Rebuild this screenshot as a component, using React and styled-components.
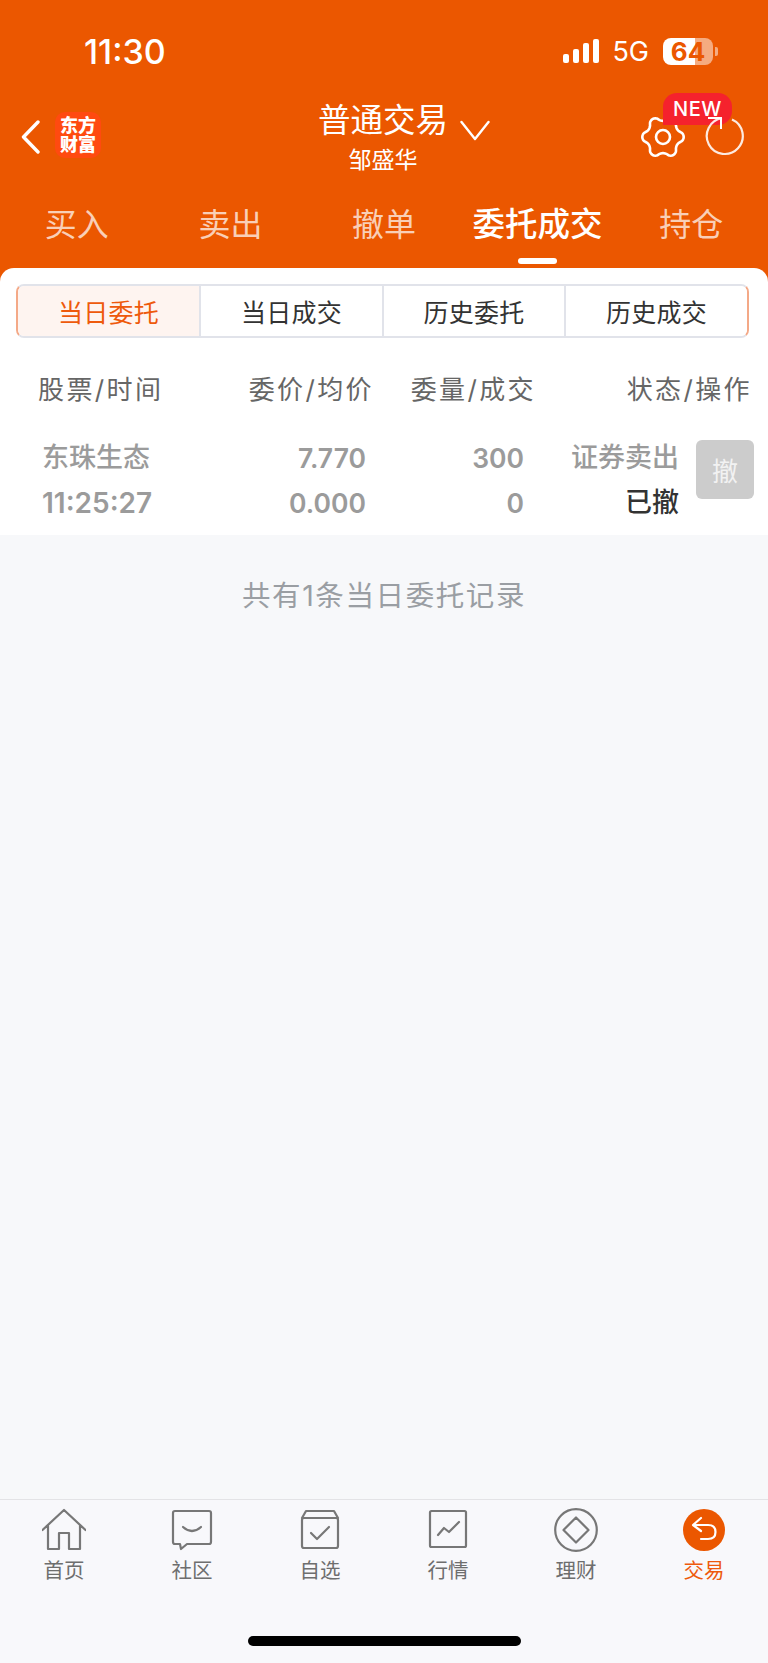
import React from 'react';
import styled, { createGlobalStyle } from 'styled-components';

const ORANGE = '#EB5700';
const FONT = 'Inter, "Noto Sans CJK SC", sans-serif';

const Global = createGlobalStyle`
  html, body { margin: 0; padding: 0; background: #f6f7f9; }
  * { box-sizing: border-box; }
`;
const Page = styled.div`
  width: 768px;
  height: 1663px;
  display: flex;
  flex-direction: column;
  overflow: hidden;
  font-family: ${FONT};
  background: #f7f8fa;
`;
const Header = styled.header`
  height: 268px;
  background: ${ORANGE};
  color: #fff;
  display: flex;
  flex-direction: column;
`;
const StatusBar = styled.div`
  height: 102px;
  display: flex;
  align-items: center;
  padding: 0 50px 0 84px;
`;
const Clock = styled.div`
  font-size: 34px;
  font-weight: 500;
  flex: 1;
`;
const Signal = styled.div`
  display: flex;
  align-items: flex-end;
  gap: 4px;
  height: 24px;
  margin-right: 13px;
  margin-left: -3px;
`;
const SignalBar = styled.span`
  width: 6px;
  height: ${p => p.$h}px;
  background: #fff;
  border-radius: 2px;
`;
const Network = styled.div`
  font-size: 27px;
  font-weight: 400;
  margin-right: 14px;
`;
const Battery = styled.div`
  width: 50px;
  height: 27px;
  border-radius: 8px;
  background: linear-gradient(90deg, #fff 64%, rgba(255,255,255,.5) 64%);
  color: ${ORANGE};
  font-size: 26px;
  font-weight: 700;
  line-height: 27px;
  text-align: center;
`;
const BatteryNub = styled.span`
  width: 3px;
  height: 9px;
  margin-left: 2px;
  border-radius: 0 2px 2px 0;
  background: rgba(255,255,255,.5);
`;
const TitleRow = styled.div`
  height: 94px;
  display: grid;
  grid-template-columns: 319px 128px 1fr;
`;
const LeftGroup = styled.div`
  display: flex;
  align-items: flex-start;
  padding: 10px 0 0 21px;
  gap: 15px;
`;
const Logo = styled.div`
  width: 46px;
  height: 46px;
  border-radius: 10px;
  background: #ff4a10;
  color: #fff;
  font-size: 18px;
  font-weight: 900;
  line-height: 19px;
  text-align: center;
  padding-top: 4px;
  white-space: nowrap;
`;
const TitleBlock = styled.div`
  display: flex;
  flex-direction: column;
  align-items: center;
`;
const Title = styled.div`
  font-size: 32.5px;
  line-height: 38px;
  white-space: nowrap;
`;
const SubTitle = styled.div`
  font-size: 23px;
  line-height: 28px;
  margin-top: 6px;
  white-space: nowrap;
`;
const RightGroup = styled.div`
  position: relative;
  padding-top: 5px;
  padding-left: 13px;
`;
const NewBadge = styled.div`
  position: absolute;
  left: 216px;
  top: -9px;
  width: 69px;
  height: 32px;
  background: #f5222d;
  border-radius: 14px 14px 14px 0;
  font-size: 20px;
  font-weight: 500;
  line-height: 32px;
  text-align: center;
  letter-spacing: .6px;
`;
const GearSlot = styled.div`
  position: absolute;
  left: 194px;
  top: 13px;
`;
const RefreshSlot = styled.div`
  position: absolute;
  left: 257px;
  top: 9px;
`;
const TopTabs = styled.nav`
  display: grid;
  grid-template-columns: repeat(5, 1fr);
  height: 48px;
  margin-top: 4px;
`;
const TopTab = styled.div`
  position: relative;
  font-size: ${p => (p.$active ? 32.5 : 32)}px;
  font-weight: ${p => (p.$active ? 500 : 400)};
  line-height: 49px;
  text-align: center;
  white-space: nowrap;
  color: ${p => (p.$active ? '#fff' : 'rgba(255,255,255,.72)')};
  &::after {
    content: '';
    display: ${p => (p.$active ? 'block' : 'none')};
    position: absolute;
    left: 50%;
    margin-left: -20px;
    top: 58px;
    width: 39px;
    height: 6px;
    border-radius: 3px;
    background: #fff;
  }
`;
const CardBack = styled.div`
  background: ${ORANGE};
`;
const Card = styled.section`
  height: 267px;
  background: #fff;
  border-radius: 14px 14px 0 0;
  padding-top: 16px;
`;
const Segments = styled.div`
  display: grid;
  grid-template-columns: 181px 183px 182px 1fr;
  height: 54px;
  margin: 0 19px 0 16px;
  border: 2px solid #e1e3ea;
  border-left-color: #f4a987;
  border-right-color: #f4a987;
  border-radius: 8px;
  overflow: hidden;
`;
const Segment = styled.div`
  display: flex;
  align-items: center;
  justify-content: center;
  font-size: 25px;
  letter-spacing: .3px;
  color: ${p => (p.$active ? '#ee5a0c' : '#333')};
  background: ${p => (p.$active ? '#fef4f0' : '#fff')};
  & + & { border-left: 2px solid #e1e3ea; }
`;
const HeadRow = styled.div`
  display: grid;
  grid-template-columns: 175px 161px 162px 216px;
  height: 36px;
  margin-top: 34px;
  padding-left: 38px;
  font-size: 26px;
  letter-spacing: 2.4px;
  line-height: 36px;
  color: #666;
  white-space: nowrap;
`;
const HeadCell = styled.div`
  text-align: ${p => (p.$right ? 'right' : 'left')};
`;
const OrderRow = styled.div`
  display: grid;
  grid-template-columns: 150px 174px 158px 155px 58px;
  margin-top: 32px;
  padding-left: 42px;
  font-size: 27px;
  color: #9b9b9b;
  font-weight: 500;
`;
const Stack = styled.div`
  display: flex;
  flex-direction: column;
  gap: 9px;
  align-items: ${p => (p.$right ? 'flex-end' : 'flex-start')};
  white-space: nowrap;
`;
const Line = styled.div`
  line-height: 36px;
  font-size: ${p => p.$size || 27}px;
  font-weight: ${p => (p.$size ? 600 : 500)};
  color: ${p => (p.$dark ? '#333' : 'inherit')};
`;
const CancelButton = styled.div`
  width: 58px;
  height: 59px;
  margin-left: 17px;
  border-radius: 6px;
  background: #ccc;
  color: #f2f2f2;
  font-size: 26px;
  font-weight: 400;
  display: flex;
  align-items: center;
  justify-content: center;
`;
const Summary = styled.main`
  flex: 1;
  padding-top: 41px;
  text-align: center;
  font-size: 28.5px;
  letter-spacing: 1.6px;
  line-height: 40px;
  color: #9a9ea3;
`;
const BottomBar = styled.footer`
  height: 164px;
  background: #f8f8fb;
  border-top: 1px solid #e3e3e6;
  padding-top: 8px;
  display: flex;
  flex-direction: column;
`;
const NavRow = styled.nav`
  display: grid;
  grid-template-columns: repeat(6, 128px);
`;
const NavItem = styled.div`
  display: flex;
  flex-direction: column;
  align-items: center;
  gap: 7px;
  font-size: 20.5px;
  line-height: 24px;
  color: ${p => (p.$active ? '#ee5a0c' : '#6e6e6e')};
`;
const HomeIndicator = styled.div`
  width: 273px;
  height: 10px;
  margin: 53px auto 0;
  border-radius: 5px;
  background: #000;
`;

const line = { fill: 'none', stroke: '#777', strokeWidth: 2.2, strokeLinejoin: 'round', strokeLinecap: 'round' };

const HomeIcon = () => (
  <svg width="44" height="44" viewBox="0 0 44 44">
    <path {...line} d="M0.5 22 L22 2 L43.5 22 M6 17 V41 H17 V25 H27 V41 H38 V17" />
  </svg>
);
const ChatIcon = () => (
  <svg width="44" height="44" viewBox="0 0 44 44">
    <path {...line} d="M5 3 H39 Q41 3 41 5 V34 Q41 36 39 36 H17 L11 41 L10 36 H5 Q3 36 3 34 V5 Q3 3 5 3 Z" />
    <path {...line} d="M13 19 Q22 27 31 19" />
  </svg>
);
const WatchIcon = () => (
  <svg width="44" height="44" viewBox="0 0 44 44">
    <path {...line} d="M4 10 L8 3 H36 L40 10 M6 10 H38 Q40 10 40 12 V38 Q40 40 38 40 H6 Q4 40 4 38 V12 Q4 10 6 10 Z" />
    <path {...line} d="M13 25 L19 31 L31 19" />
  </svg>
);
const MarketIcon = () => (
  <svg width="44" height="44" viewBox="0 0 44 44">
    <rect {...line} x="4" y="3" width="36" height="36" rx="1.5" />
    <path {...line} d="M12 27 L18 20 L23 24 L33 14" />
  </svg>
);
const WealthIcon = () => (
  <svg width="44" height="44" viewBox="0 0 44 44">
    <circle {...line} cx="22" cy="22" r="20.8" />
    <path {...line} d="M22 9.5 L34.5 22 L22 34.5 L9.5 22 Z" />
  </svg>
);
const TradeIcon = () => (
  <svg width="44" height="44" viewBox="0 0 44 44">
    <circle cx="22" cy="22" r="21" fill={ORANGE} />
    <path d="M19 10 L11 17 L19 23 M11.5 17 H26 Q33.5 17 33.5 24 Q33.5 31 26 31 H19" fill="none" stroke="#fff" strokeWidth="2.2" strokeLinecap="round" strokeLinejoin="round" />
  </svg>
);
const BackIcon = () => (
  <svg width="19" height="34" viewBox="0 0 19 34" style={{ marginTop: 8 }}>
    <path d="M17 2 L2.5 17 L17 32" fill="none" stroke="#fff" strokeWidth="3.4" strokeLinecap="round" strokeLinejoin="round" />
  </svg>
);
const ChevronIcon = () => (
  <svg width="30" height="22" viewBox="0 0 30 22" style={{ marginTop: 13 }}>
    <path d="M1.5 2 L15 19 L28.5 2" fill="none" stroke="#fff" strokeWidth="2.4" strokeLinecap="round" strokeLinejoin="round" />
  </svg>
);

// six soft lobes, same outline as the app's settings gear
const gearPath = () => {
  const pts = [];
  for (let i = 0; i < 96; i++) {
    const a = (i / 96) * Math.PI * 2;
    const c = Math.cos(6 * a);
    const r = 18.4 + 2.3 * Math.sign(c) * Math.pow(Math.abs(c), 0.7);
    pts.push(`${(22 + r * Math.cos(a)).toFixed(2)} ${(22 + r * Math.sin(a)).toFixed(2)}`);
  }
  return `M${pts.join(' L')} Z`;
};
const GearIcon = () => (
  <svg width="44" height="44" viewBox="0 0 44 44">
    <path d={gearPath()} fill="none" stroke="#fff" strokeWidth="2.6" strokeLinejoin="round" />
    <circle cx="22" cy="22" r="7" fill="none" stroke="#fff" strokeWidth="2.6" />
  </svg>
);
const RefreshIcon = () => (
  <svg width="40" height="48" viewBox="0 0 40 48">
    <path d="M18 7.2 A18 18 0 1 0 28 8.5" fill="none" stroke="rgba(255,255,255,.88)" strokeWidth="2.2" />
    <path d="M4 7 H17 V18" fill="none" stroke="#fff" strokeWidth="2" />
  </svg>
);

const topTabs = ['买入', '卖出', '撤单', '委托成交', '持仓'];
const segments = ['当日委托', '当日成交', '历史委托', '历史成交'];
const navItems = [
  { label: '首页', Icon: HomeIcon },
  { label: '社区', Icon: ChatIcon },
  { label: '自选', Icon: WatchIcon },
  { label: '行情', Icon: MarketIcon },
  { label: '理财', Icon: WealthIcon },
  { label: '交易', Icon: TradeIcon, active: true },
];

export default function App() {
  return (
    <Page>
      <Global />
      <Header>
        <StatusBar>
          <Clock>11:30</Clock>
          <Signal>
            <SignalBar $h={9} />
            <SignalBar $h={14} />
            <SignalBar $h={20} />
            <SignalBar $h={24} />
          </Signal>
          <Network>5G</Network>
          <Battery>64</Battery>
          <BatteryNub />
        </StatusBar>
        <TitleRow>
          <LeftGroup>
            <BackIcon />
            <Logo>东方<br />财富</Logo>
          </LeftGroup>
          <TitleBlock>
            <Title>普通交易</Title>
            <SubTitle>邹盛华</SubTitle>
          </TitleBlock>
          <RightGroup>
            <ChevronIcon />
            <GearSlot><GearIcon /></GearSlot>
            <NewBadge>NEW</NewBadge>
            <RefreshSlot><RefreshIcon /></RefreshSlot>
          </RightGroup>
        </TitleRow>
        <TopTabs>
          {topTabs.map(t => (
            <TopTab key={t} $active={t === '委托成交'}>{t}</TopTab>
          ))}
        </TopTabs>
      </Header>
      <CardBack>
        <Card>
          <Segments>
            {segments.map((s, i) => (
              <Segment key={s} $active={i === 0}>{s}</Segment>
            ))}
          </Segments>
          <HeadRow>
            <HeadCell>股票/时间</HeadCell>
            <HeadCell $right>委价/均价</HeadCell>
            <HeadCell $right>委量/成交</HeadCell>
            <HeadCell $right>状态/操作</HeadCell>
          </HeadRow>
          <OrderRow>
            <Stack>
              <Line>东珠生态</Line>
              <Line $size={28}>11:25:27</Line>
            </Stack>
            <Stack $right>
              <Line $size={26.5}>7.770</Line>
              <Line $size={26.5}>0.000</Line>
            </Stack>
            <Stack $right>
              <Line $size={26.5}>300</Line>
              <Line $size={26.5}>0</Line>
            </Stack>
            <Stack $right>
              <Line>证券卖出</Line>
              <Line $dark>已撤</Line>
            </Stack>
            <CancelButton>撤</CancelButton>
          </OrderRow>
        </Card>
      </CardBack>
      <Summary>共有1条当日委托记录</Summary>
      <BottomBar>
        <NavRow>
          {navItems.map(({ label, Icon, active }) => (
            <NavItem key={label} $active={active}>
              <Icon />
              {label}
            </NavItem>
          ))}
        </NavRow>
        <HomeIndicator />
      </BottomBar>
    </Page>
  );
}
